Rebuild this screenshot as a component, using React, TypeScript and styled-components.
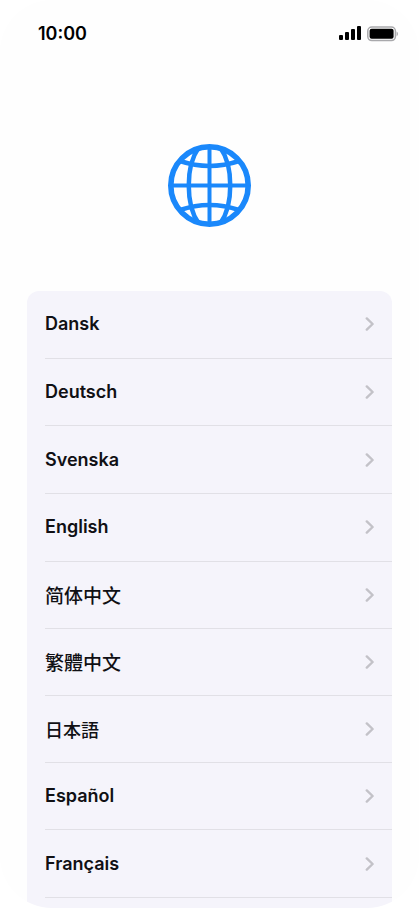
import React from "react";
import styled, { createGlobalStyle } from "styled-components";

const GlobalStyle = createGlobalStyle`
  * { box-sizing: border-box; }
  body {
    margin: 0;
    background: #ffffff;
    color: #101014;
    font-family: Inter, "Noto Sans CJK SC", sans-serif;
  }
`;

const Screen = styled.div`
  display: flex;
  flex-direction: column;
  min-height: 100vh;
  overflow: hidden;
  border-radius: 52px;
  background: #fefefe;
`;

const StatusBar = styled.header`
  display: flex;
  align-items: center;
  justify-content: space-between;
  height: 67px;
  padding: 0 20px 0 38px;
`;

const Clock = styled.time`
  font-size: 18px;
  line-height: 24px;
  font-weight: 600;
  color: #000000;
`;

const StatusIcons = styled.div`
  display: flex;
  align-items: center;
  gap: 5px;

  svg { display: block; }
`;

const Hero = styled.div`
  display: flex;
  justify-content: center;
  padding: 77px 0 64px;

  svg { display: block; }
`;

const Languages = styled.ul`
  display: flex;
  flex: 1;
  flex-direction: column;
  margin: 0 27px;
  padding: 0 0 10px;
  list-style: none;
  border-radius: 12px 12px 0 0;
  background: #f5f4fb;
`;

const LanguageItem = styled.li`
  display: flex;
  flex: 1;
  min-height: 67px;
  margin-left: 18px;
  border-bottom: 1px solid #e1e0e6;
`;

const LanguageButton = styled.button<{ $cjk?: boolean }>`
  display: flex;
  flex: 1;
  align-items: center;
  justify-content: space-between;
  padding: 0 17px 0 0;
  border: 0;
  background: transparent;
  color: inherit;
  font-family: inherit;
  font-size: ${({ $cjk }) => ($cjk ? 19 : 18)}px;
  line-height: ${({ $cjk }) => ($cjk ? 24 : 26)}px;
  font-weight: ${({ $cjk }) => ($cjk ? 500 : 600)};
  text-align: left;
  cursor: pointer;

  &:lang(zh-Hant) { font-family: "Noto Sans CJK TC", sans-serif; }
  &:lang(zh-Hans) { font-family: "Noto Sans CJK SC", sans-serif; }
  &:lang(ja) { font-family: "Noto Sans CJK JP", sans-serif; font-size: 18px; }
`;

const languages = [
  { code: "da", name: "Dansk" },
  { code: "de", name: "Deutsch" },
  { code: "sv", name: "Svenska" },
  { code: "en", name: "English" },
  { code: "zh-Hans", name: "简体中文", cjk: true },
  { code: "zh-Hant", name: "繁體中文", cjk: true },
  { code: "ja", name: "日本語", cjk: true },
  { code: "es", name: "Español" },
  { code: "fr", name: "Français" },
];

const Signal = () => (
  <svg width="23" height="15" viewBox="0 0 23 15" role="img" aria-label="Signal">
    <rect x="0" y="9" width="4" height="5" rx="1" />
    <rect x="6" y="6" width="4" height="8" rx="1" />
    <rect x="12" y="3" width="4" height="11" rx="1" />
    <rect x="18" y="0" width="4" height="14" rx="1" />
  </svg>
);

const Battery = () => (
  <svg width="32" height="16" viewBox="0 0 32 16" role="img" aria-label="Battery">
    <rect x="0.8" y="1" width="27.6" height="13.6" rx="4" fill="none" stroke="#a9a9ac" strokeWidth="1.5" />
    <rect x="2.6" y="2.8" width="24" height="10" rx="2" />
    <path d="M29.6 5.4c1.8.8 1.8 4 0 4.8z" fill="#a6a6a9" />
  </svg>
);

const Globe = () => (
  <svg width="83" height="83" viewBox="0 0 83 83" fill="none" stroke="#1a88fb" strokeWidth="4.5" role="img" aria-label="Language">
    <circle cx="41.5" cy="41.5" r="38.7" strokeWidth="5.6" />
    <path d="M41.5 3v77M3 41.5h77" strokeWidth="4" />
    <path d="M30.5 4C17.5 22 17.5 61 30.5 79M52.5 4C65.5 22 65.5 61 52.5 79" />
    <path d="M12 17Q41.5 27 71 17M12 66Q41.5 56 71 66" />
  </svg>
);

const Chevron = () => (
  <svg width="10" height="14" viewBox="0 0 10 14" fill="none" stroke="#c3c2c8" strokeWidth="2.4" strokeLinecap="round" strokeLinejoin="round" aria-hidden="true">
    <path d="M1.8 1.4L7.6 7L1.8 12.6" />
  </svg>
);

export default function App() {
  return (
    <>
      <GlobalStyle />
      <Screen>
        <StatusBar>
          <Clock>10:00</Clock>
          <StatusIcons>
            <Signal />
            <Battery />
          </StatusIcons>
        </StatusBar>
        <Hero>
          <Globe />
        </Hero>
        <Languages>
          {languages.map(({ code, name, cjk }) => (
            <LanguageItem key={code}>
              <LanguageButton type="button" lang={code} $cjk={cjk}>
                {name}
                <Chevron />
              </LanguageButton>
            </LanguageItem>
          ))}
        </Languages>
      </Screen>
    </>
  );
}
